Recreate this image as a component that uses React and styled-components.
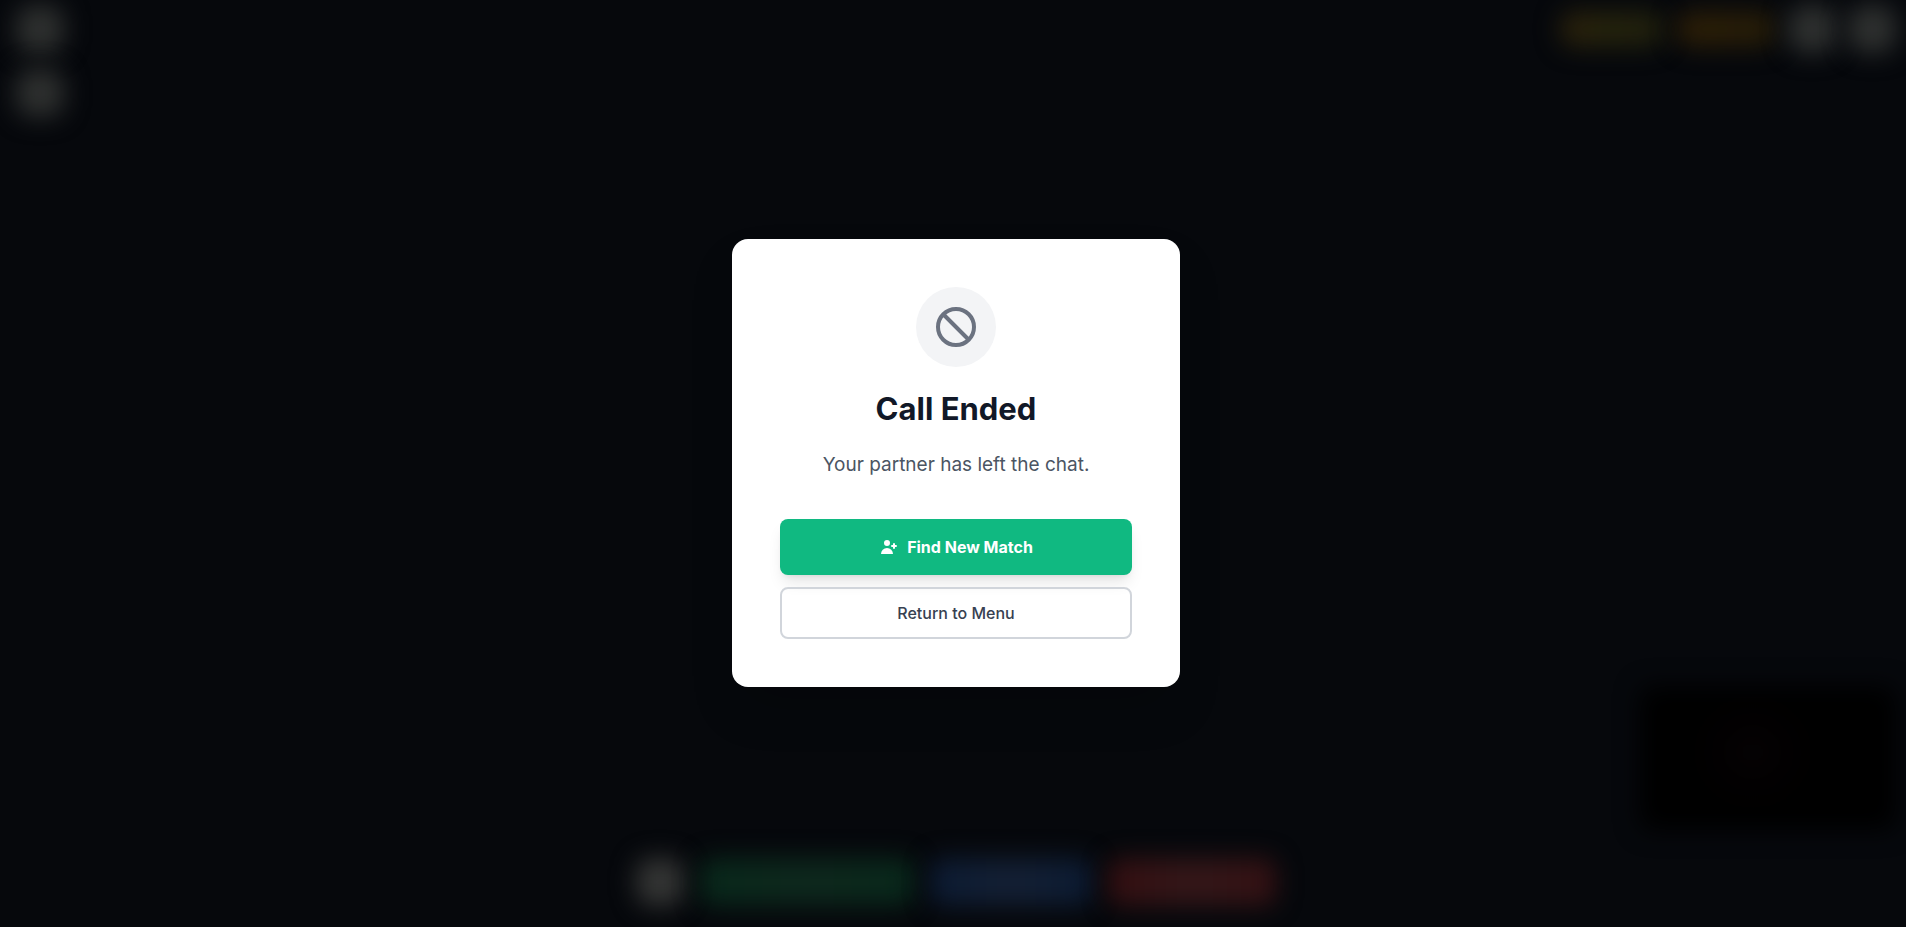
import React from 'react';
import styled, {createGlobalStyle} from 'styled-components';

const GlobalStyle = createGlobalStyle`
* {
box-sizing: border-box;
}
body {
margin: 0;
background: #06080c;
font-family: Inter, "Open Sans", sans-serif;
}
`;

const Page = styled.div`
display: grid;
min-height: 100vh;
overflow: hidden;
`;

const CallScreen = styled.div`
grid-area: 1 / 1;
display: flex;
flex-direction: column;
justify-content: space-between;
padding: 5px 10px 21px 16px;
`;

const TopBar = styled.div`
display: flex;
justify-content: space-between;
align-items: flex-start;
`;

const ToolColumn = styled.div`
display: flex;
flex-direction: column;
gap: 16px;
`;

const ToolRow = styled.div`
display: flex;
justify-content: center;
align-items: center;
gap: ${props => props.gap};
`;

const Blurred = styled.div`
width: ${props => props.width};
height: ${props => props.height};
border-radius: ${props => props.radius || '16px'};
background: ${props => props.color};
filter: blur(12px);
`;

const BottomArea = styled.div`
display: flex;
flex-direction: column;
gap: 28px;
`;

const SelfVideo = styled(Blurred)`
align-self: flex-end;
`;

const Overlay = styled.main`
grid-area: 1 / 1;
z-index: 1;
display: flex;
justify-content: center;
align-items: center;
padding: 16px 10px 17px 16px;
`;

const Card = styled.section`
display: flex;
flex-direction: column;
align-items: center;
width: 100%;
max-width: 448px;
padding: 48px;
border-radius: 16px;
background: #ffffff;
text-align: center;
box-shadow: 0 25px 50px -12px rgba(0, 0, 0, 0.25);
`;

const IconCircle = styled.div`
display: flex;
justify-content: center;
align-items: center;
width: 80px;
height: 80px;
border-radius: 50%;
background: #f3f4f6;
color: #6b7280;
`;

const Title = styled.h1`
margin: 24px 0;
font-size: 31px;
font-weight: 700;
line-height: 36px;
color: #111827;
`;

const Message = styled.p`
margin: 0 0 40px;
font-size: 19px;
line-height: 28px;
color: #4b5563;
`;

const Actions = styled.div`
display: flex;
flex-direction: column;
gap: 12px;
width: 100%;
`;

const Button = styled.button`
display: flex;
justify-content: center;
align-items: center;
gap: 8px;
width: 100%;
border-radius: 8px;
font-family: inherit;
font-size: 16px;
line-height: 24px;
cursor: pointer;
`;

const PrimaryButton = styled(Button)`
padding: 16px 24px;
border: none;
background: #10b981;
color: #ffffff;
font-weight: 700;
box-shadow: 0 10px 15px -3px rgba(0, 0, 0, 0.1), 0 4px 6px -4px rgba(0, 0, 0, 0.1);
`;

const SecondaryButton = styled(Button)`
padding: 12px 24px;
border: 2px solid #d1d5db;
background: transparent;
color: #374151;
font-weight: 500;
`;

const BanIcon = () => (
    <svg width="48" height="48" viewBox="0 0 24 24" fill="none" stroke="currentColor" strokeWidth="2" aria-hidden="true">
        <path strokeLinecap="round" strokeLinejoin="round" d="M18.364 18.364A9 9 0 005.636 5.636m12.728 12.728A9 9 0 015.636 5.636m12.728 12.728L5.636 5.636" />
    </svg>
);

const UserAddIcon = () => (
    <svg width="20" height="20" viewBox="0 0 20 20" fill="currentColor" aria-hidden="true">
        <path d="M8 9a3 3 0 100-6 3 3 0 000 6zM8 11a6 6 0 016 6H2a6 6 0 016-6zM16 7a1 1 0 10-2 0v1h-1a1 1 0 100 2h1v1a1 1 0 102 0v-1h1a1 1 0 100-2h-1V7z" />
    </svg>
);

function App() {
    return (
        <Page>
            <GlobalStyle />
            <CallScreen aria-hidden="true">
                <TopBar>
                    <ToolColumn>
                        <Blurred width="48px" height="48px" color="#2e302f" />
                        <Blurred width="48px" height="48px" color="#2e302f" />
                    </ToolColumn>
                    <ToolRow gap="12px">
                        <Blurred width="104px" height="36px" color="linear-gradient(90deg, #2b210b, #24220d 50%, #20200d)" />
                        <Blurred width="100px" height="36px" color="linear-gradient(90deg, #2c1e07, #261d08)" />
                        <Blurred width="48px" height="48px" color="#2e302f" />
                        <Blurred width="48px" height="48px" color="#2e302f" />
                    </ToolRow>
                </TopBar>
                <BottomArea>
                    <SelfVideo width="256px" height="144px" radius="12px" color="radial-gradient(circle at 44% 46%, #060304, #020001 32px, #000000 64px)" />
                    <ToolRow gap="16px">
                        <Blurred width="48px" height="48px" color="#343534" />
                        <Blurred width="214px" height="48px" radius="12px" color="linear-gradient(90deg, #08281b, #0e281d 50%, #08281b)" />
                        <Blurred width="162px" height="48px" radius="12px" color="linear-gradient(90deg, #0c1b33, #142034 50%, #0c1b33)" />
                        <Blurred width="168px" height="48px" radius="12px" color="linear-gradient(90deg, #340f11, #341719 50%, #341113)" />
                    </ToolRow>
                </BottomArea>
            </CallScreen>
            <Overlay>
                <Card role="dialog" aria-labelledby="call-title" aria-describedby="call-message">
                    <IconCircle><BanIcon /></IconCircle>
                    <Title id="call-title">Call Ended</Title>
                    <Message id="call-message">Your partner has left the chat.</Message>
                    <Actions>
                        <PrimaryButton type="button"><UserAddIcon />Find New Match</PrimaryButton>
                        <SecondaryButton type="button">Return to Menu</SecondaryButton>
                    </Actions>
                </Card>
            </Overlay>
        </Page>
    );
}

export default App;
